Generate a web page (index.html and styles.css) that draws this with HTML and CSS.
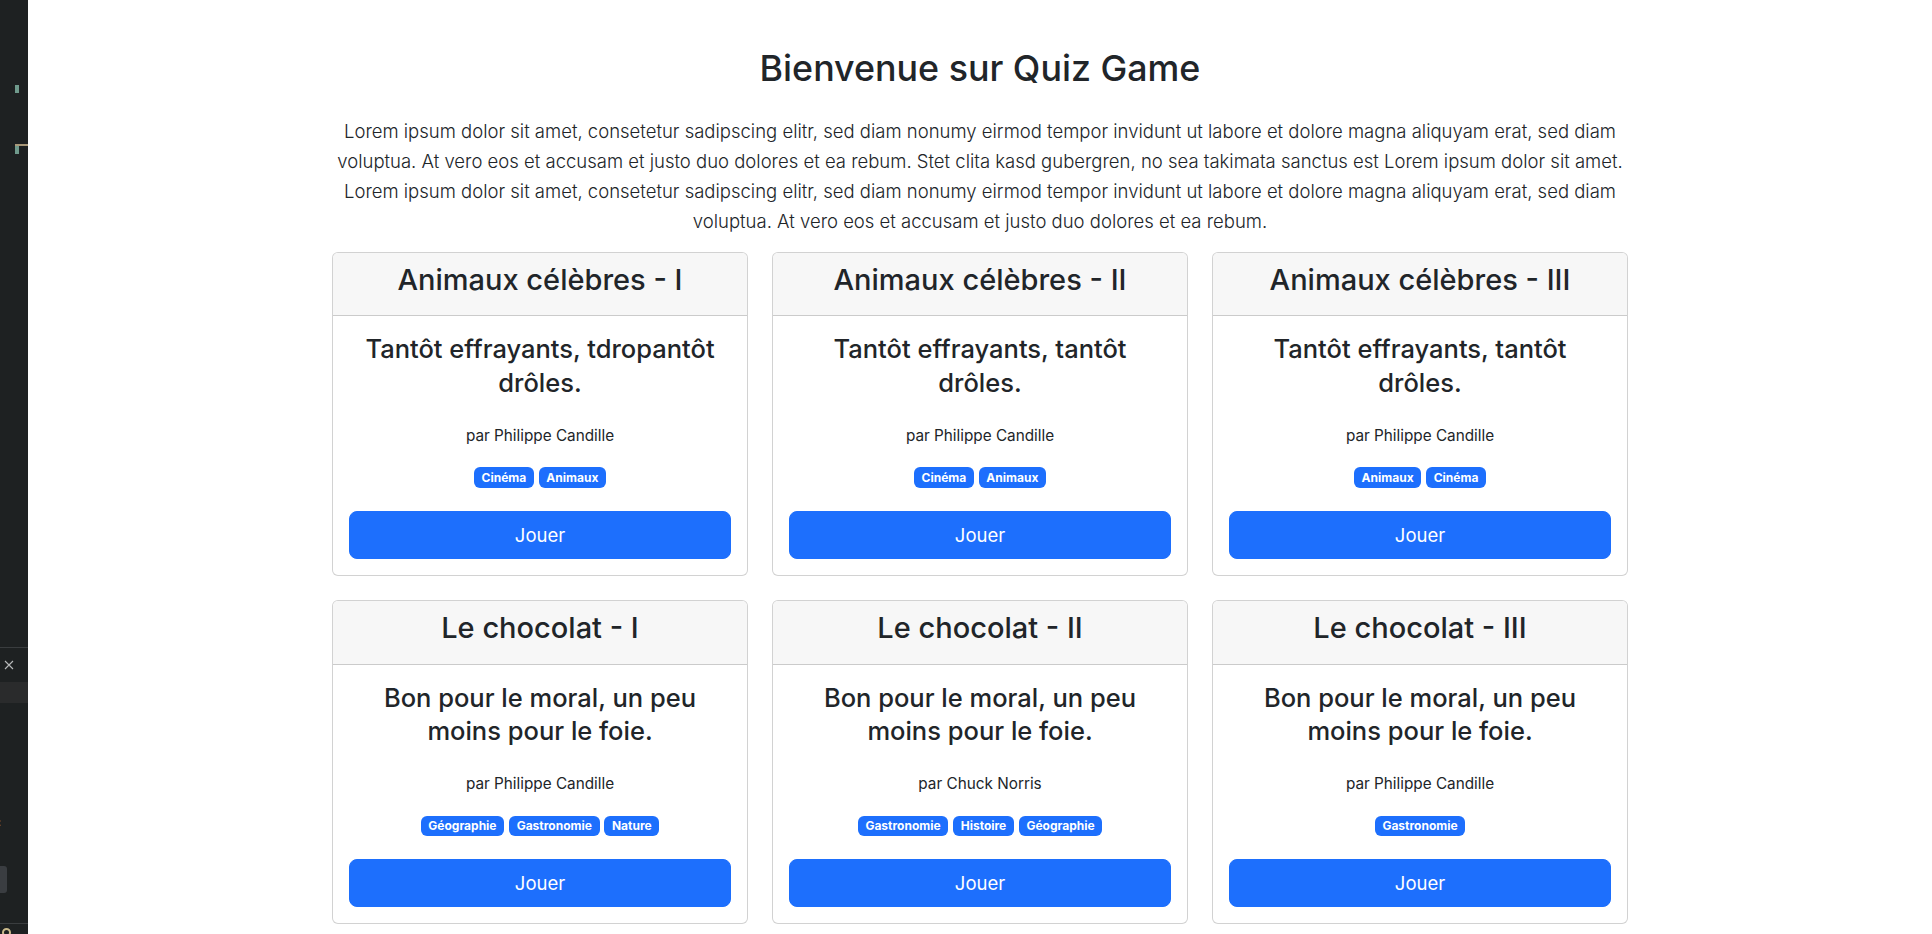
FILE: index.html
```html
<!DOCTYPE html>
<html lang="fr">
<head>
<meta charset="utf-8">
<title>Quiz Game</title>
<link rel="stylesheet" href="styles.css">
</head>
<body>
<div class="layout">
  <aside class="editor-strip">
    <div class="strip-top">
      <span class="mark mark-a"></span>
      <span class="mark-line"></span>
      <span class="mark mark-b"></span>
    </div>
    <div class="strip-panel">
      <div class="panel-head">
        <svg class="close-icon" width="10" height="10" viewBox="0 0 10 10"><path d="M1 1L9 9M9 1L1 9" stroke="#b8babb" stroke-width="1.1" fill="none"/></svg>
      </div>
      <div class="panel-band"></div>
      <div class="panel-space"></div>
      <div class="panel-dots">:</div>
      <div class="panel-input"></div>
      <div class="panel-foot"><span class="foot-icon"></span></div>
    </div>
  </aside>
  <main class="page">
    <div class="container">
      <h1 class="title">Bienvenue sur Quiz Game</h1>
      <p class="lead">Lorem ipsum dolor sit amet, consetetur sadipscing elitr, sed diam nonumy eirmod tempor invidunt ut labore et dolore magna aliquyam erat, sed diam voluptua. At vero eos et accusam et justo duo dolores et ea rebum. Stet clita kasd gubergren, no sea takimata sanctus est Lorem ipsum dolor sit amet. Lorem ipsum dolor sit amet, consetetur sadipscing elitr, sed diam nonumy eirmod tempor invidunt ut labore et dolore magna aliquyam erat, sed diam voluptua. At vero eos et accusam et justo duo dolores et ea rebum.</p>

      <div class="cards">
        <div class="card">
          <div class="card-header"><h2 class="card-title">Animaux célèbres - I</h2></div>
          <div class="card-body">
            <h3 class="card-sub">Tantôt effrayants, tdropantôt drôles.</h3>
            <p class="author">par Philippe Candille</p>
            <div class="tags"><span class="badge">Cinéma</span> <span class="badge">Animaux</span></div>
            <a class="btn" href="#">Jouer</a>
          </div>
        </div>
        <div class="card">
          <div class="card-header"><h2 class="card-title">Animaux célèbres - II</h2></div>
          <div class="card-body">
            <h3 class="card-sub">Tantôt effrayants, tantôt drôles.</h3>
            <p class="author">par Philippe Candille</p>
            <div class="tags"><span class="badge">Cinéma</span> <span class="badge">Animaux</span></div>
            <a class="btn" href="#">Jouer</a>
          </div>
        </div>
        <div class="card">
          <div class="card-header"><h2 class="card-title">Animaux célèbres - III</h2></div>
          <div class="card-body">
            <h3 class="card-sub">Tantôt effrayants, tantôt drôles.</h3>
            <p class="author">par Philippe Candille</p>
            <div class="tags"><span class="badge">Animaux</span> <span class="badge">Cinéma</span></div>
            <a class="btn" href="#">Jouer</a>
          </div>
        </div>
        <div class="card">
          <div class="card-header"><h2 class="card-title">Le chocolat - I</h2></div>
          <div class="card-body">
            <h3 class="card-sub">Bon pour le moral, un peu moins pour le foie.</h3>
            <p class="author">par Philippe Candille</p>
            <div class="tags"><span class="badge">Géographie</span> <span class="badge">Gastronomie</span> <span class="badge">Nature</span></div>
            <a class="btn" href="#">Jouer</a>
          </div>
        </div>
        <div class="card">
          <div class="card-header"><h2 class="card-title">Le chocolat - II</h2></div>
          <div class="card-body">
            <h3 class="card-sub">Bon pour le moral, un peu moins pour le foie.</h3>
            <p class="author">par Chuck Norris</p>
            <div class="tags"><span class="badge">Gastronomie</span> <span class="badge">Histoire</span> <span class="badge">Géographie</span></div>
            <a class="btn" href="#">Jouer</a>
          </div>
        </div>
        <div class="card">
          <div class="card-header"><h2 class="card-title">Le chocolat - III</h2></div>
          <div class="card-body">
            <h3 class="card-sub">Bon pour le moral, un peu moins pour le foie.</h3>
            <p class="author">par Philippe Candille</p>
            <div class="tags"><span class="badge">Gastronomie</span></div>
            <a class="btn" href="#">Jouer</a>
          </div>
        </div>
      </div>
    </div>
  </main>
</div>
</body>
</html>
```

FILE: styles.css
```css
* { box-sizing: border-box; }

html, body {
  margin: 0;
  height: 100%;
}

body {
  font-family: Inter, "Noto Sans", "Liberation Sans", sans-serif;
  color: #212529;
  background: #ffffff;
  overflow: hidden;
}

.layout {
  display: flex;
  height: 934px;
}

/* left editor strip */
.editor-strip {
  width: 28px;
  flex: 0 0 28px;
  background: #1e2122;
  display: flex;
  flex-direction: column;
  justify-content: space-between;
}

.strip-top {
  position: relative;
  height: 160px;
}

.mark {
  position: absolute;
  left: 15px;
  width: 4px;
  background: #6f9a8c;
}

.mark-a { top: 85px; height: 8px; }
.mark-b { top: 146px; height: 8px; }

.mark-line {
  position: absolute;
  left: 15px;
  top: 144px;
  width: 13px;
  height: 2px;
  background: #a89778;
}

.strip-panel {
  height: 287px;
  border-top: 1px solid #3a3d3f;
  display: flex;
  flex-direction: column;
}

.panel-head {
  height: 34px;
  display: flex;
  align-items: center;
  padding-left: 4px;
}

.panel-band {
  height: 21px;
  background: #2a2b2c;
}

.panel-space { height: 113px; }

.panel-dots {
  height: 12px;
  font-size: 11px;
  line-height: 12px;
  color: #9a9c9e;
  margin-left: -2px;
}

.panel-input {
  margin-top: 38px;
  width: 7px;
  height: 27px;
  background: #3a3d41;
  border-radius: 0 3px 3px 0;
}

.panel-foot {
  margin-top: auto;
  height: 11px;
  border-top: 1px solid #3a3d3f;
  position: relative;
}

.foot-icon {
  position: absolute;
  left: 2px;
  top: 4px;
  width: 9px;
  height: 9px;
  border: 2px solid #c9b98a;
  border-radius: 50%;
}

/* page */
.page {
  flex: 1;
  background: #ffffff;
}

.container {
  max-width: 1320px;
  margin: 0 auto;
  padding: 0 12px;
}

.title {
  margin: 44px 0 24px;
  font-size: 35.8px;
  font-weight: 500;
  line-height: 48px;
  text-align: center;
}

.lead {
  margin: 0 0 16px;
  font-size: 18.5px;
  font-weight: 300;
  line-height: 30px;
  text-align: center;
}

.cards {
  display: grid;
  grid-template-columns: repeat(3, 1fr);
  gap: 24px;
}

.card {
  border: 1px solid rgba(0, 0, 0, 0.175);
  border-radius: 6px;
  background: #fff;
  overflow: hidden;
}

.card-header {
  background: #f7f7f7;
  border-bottom: 1px solid rgba(0, 0, 0, 0.175);
  padding: 8px 16px;
  text-align: center;
}

.card-title {
  margin: 0 0 8px;
  font-size: 29px;
  font-weight: 500;
  line-height: 38.4px;
}

.card-body {
  padding: 16px;
  text-align: center;
}

.card-sub {
  margin: 0 0 24px;
  font-size: 25.5px;
  font-weight: 500;
  line-height: 33.6px;
}

.author {
  margin: 0 0 16px;
  font-size: 15.3px;
  line-height: 24px;
}

.tags {
  font-size: 16px;
  line-height: 24px;
  margin-bottom: 23.4px;
}

.badge {
  display: inline-block;
  padding: 4.2px 7.8px;
  font-size: 12px;
  font-weight: 700;
  line-height: 1;
  color: #fff;
  background: #1d6ffd;
  border-radius: 6px;
  vertical-align: baseline;
}

.btn {
  display: block;
  padding: 8px 16px;
  font-size: 18.5px;
  line-height: 30px;
  color: #fff;
  background: #1d6ffd;
  border: 1px solid #1d6ffd;
  border-radius: 8px;
  text-decoration: none;
  text-align: center;
}
```
